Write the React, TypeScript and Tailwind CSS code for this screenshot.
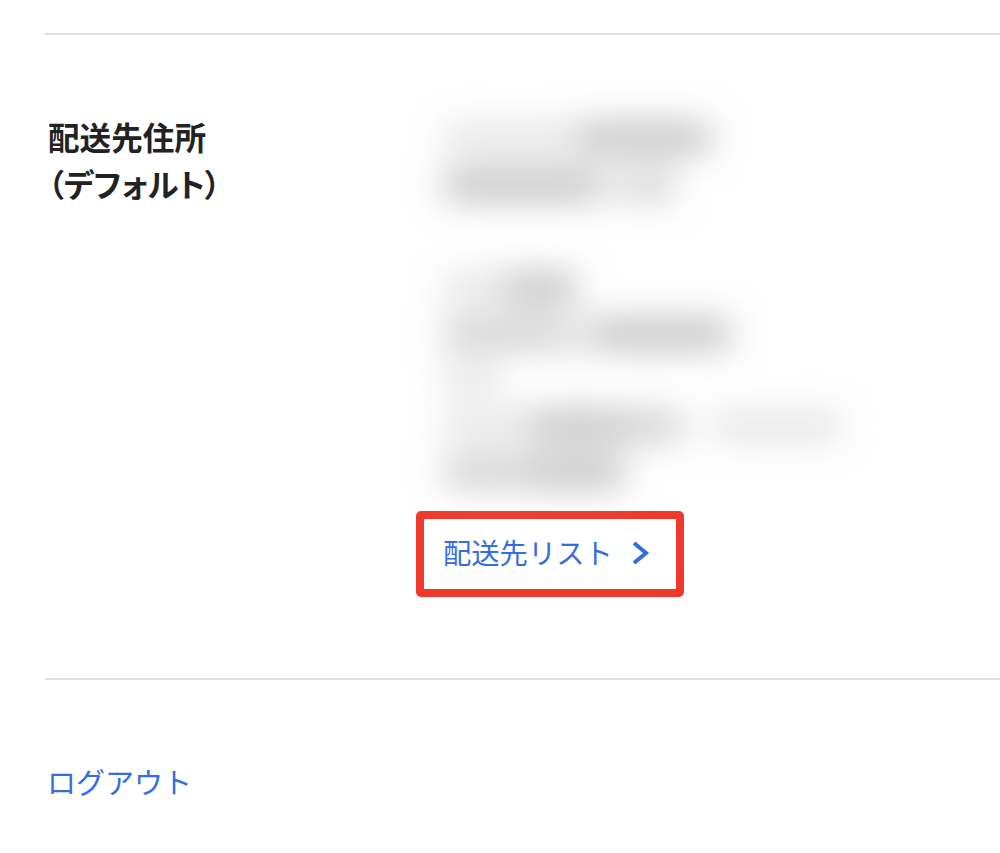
const cjk = { fontFamily: '"Noto Sans CJK JP", "Noto Sans", sans-serif' };

const DARK = 'bg-[#b6b6b6]';
const MID = 'bg-[#c6c6c6]';
const LIGHT = 'bg-[#e0e0e0]';
const NONE = 'bg-transparent';

// blurred-out address lines: each row is a list of [width, shade] chunks
type Chunk = [number, string];

const NAME_ROWS: Chunk[][] = [
  [[136, LIGHT], [130, DARK]],
  [[152, DARK], [40, LIGHT], [36, MID]],
];

const ADDRESS_ROWS: Chunk[][] = [
  [[62, LIGHT], [70, DARK]],
  [[120, MID], [30, LIGHT], [136, DARK]],
  [[56, LIGHT]],
  [[88, LIGHT], [90, DARK], [60, MID], [30, NONE], [130, LIGHT]],
  [[88, MID], [92, DARK]],
];

function BlurBlock({ rows, className }: { rows: Chunk[][]; className: string }) {
  return (
    <div className={`flex flex-col pl-[28px] blur-[18px] ${className}`}>
      {rows.map((row, i) => (
        <div key={i} className="flex">
          {row.map(([w, c], j) => (
            <div key={j} className={`h-[26px] ${c}`} style={{ width: w }} />
          ))}
        </div>
      ))}
    </div>
  );
}

export default function App() {
  return (
    <div className="min-h-[853px] w-[1000px] overflow-hidden bg-white pt-[33px] pl-[45px]" style={cjk}>
      <div className="h-[2px] bg-[#e0e0e4]" />

      <section className="flex pt-[78px]">
        <h2 className="w-[371px] shrink-0 pl-[3px] text-[31.6px] leading-[47px] font-bold text-[#222222] [font-feature-settings:'palt']">
          配送先住所
          <br />
          （デフォルト）
        </h2>

        <div className="flex flex-col">
          <BlurBlock rows={NAME_ROWS} className="mt-[12px] gap-[21px]" />
          <BlurBlock rows={ADDRESS_ROWS} className="mt-[77px] gap-[20px]" />

          <a className="mt-[26px] flex h-[86px] w-[268px] items-center rounded-[5px] border-[8px] border-[#ee3a2c] pb-[3px] pl-[19px] text-[28.3px] text-[#326ee0]">
            <span>配送先リスト</span>
            <svg className="ml-[18px] h-[26px] w-[20px]" viewBox="0 0 20 26" fill="none" stroke="currentColor" strokeWidth="4">
              <path d="M3 3 L15 13 L3 23" />
            </svg>
          </a>
        </div>
      </section>

      <div className="mt-[81px] h-[2px] bg-[#e0e0e4]" />

      <a className="mt-[78px] block pl-[2px] text-[29px] leading-[46px] text-[#326ee0]">ログアウト</a>
    </div>
  );
}
